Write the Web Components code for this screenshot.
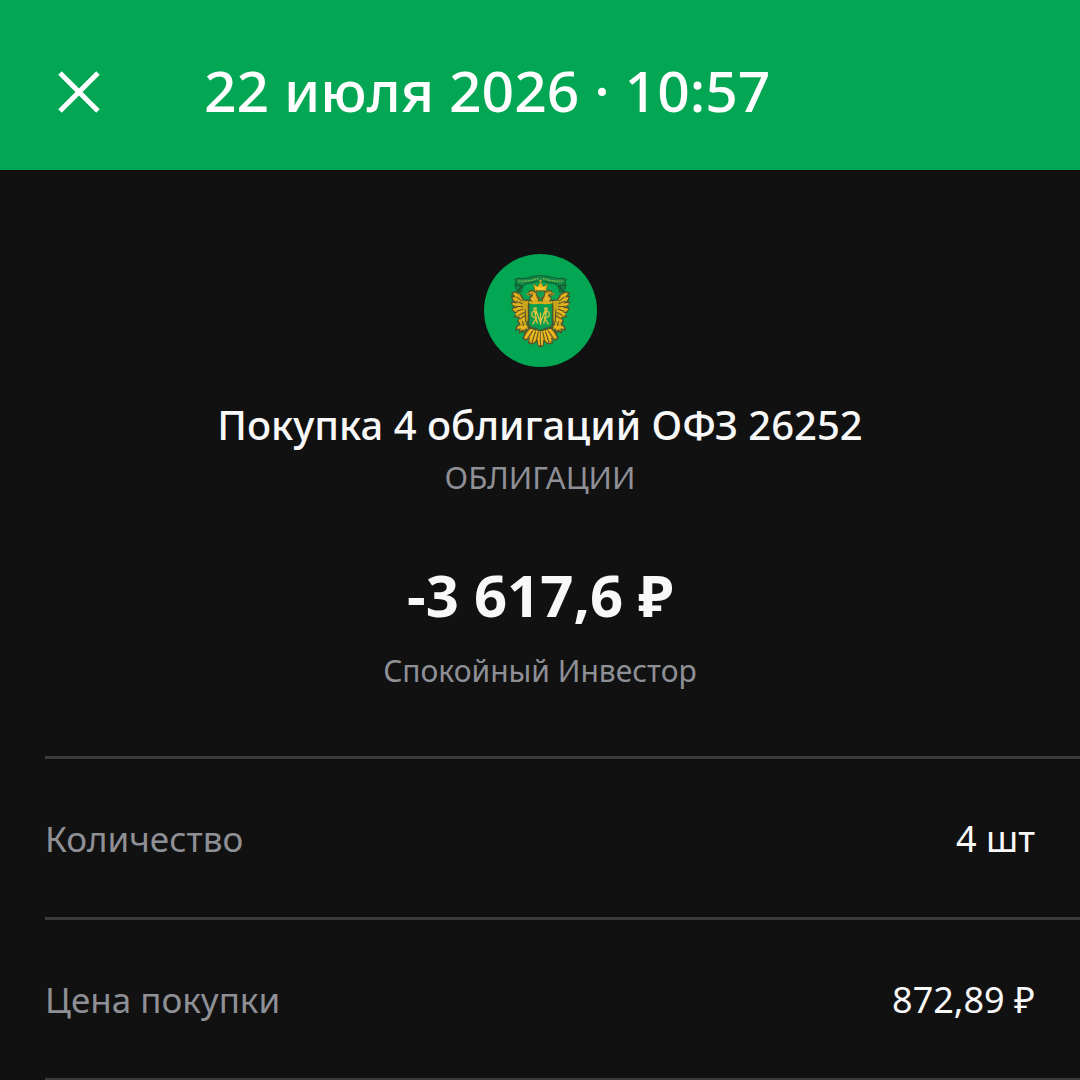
<!DOCTYPE html>
<html lang="ru">
<head>
<meta charset="UTF-8">
<meta name="viewport" content="width=device-width, initial-scale=1">
<title>Покупка облигаций</title>
<style>
    body {
        margin: 0;
        background: #111111;
        color: #f8f8f8;
        font-family: "Noto Sans", "Open Sans", sans-serif;
    }
</style>
</head>
<body>
<operation-page>
    <operation-header slot="header">22 июля 2026 · 10:57</operation-header>
    <operation-summary>
        <bond-emblem slot="icon"></bond-emblem>
        <span slot="title">Покупка 4 облигаций ОФЗ 26252</span>
        <span slot="kind">ОБЛИГАЦИИ</span>
        <span slot="amount">-3 617,6 ₽</span>
        <span slot="account">Спокойный Инвестор</span>
    </operation-summary>
    <detail-row label="Количество">4 шт</detail-row>
    <detail-row label="Цена покупки">872,89 ₽</detail-row>
    <detail-end></detail-end>
</operation-page>

<script>
class OperationPage extends HTMLElement {
    constructor() {
        super();
        const shadow = this.attachShadow({ mode: 'open' });
        shadow.innerHTML = `
            <style>
                :host { display: block; }
                main { display: flex; flex-direction: column; }
            </style>
            <slot name="header"></slot>
            <main><slot></slot></main>
        `;
    }
}

class OperationHeader extends HTMLElement {
    constructor() {
        super();
        const shadow = this.attachShadow({ mode: 'open' });
        shadow.innerHTML = `
            <style>
                :host { display: block; background: #03a653; color: #ffffff; }
                header {
                    display: flex;
                    align-items: center;
                    gap: 88px;
                    padding: 44px 42px 30px;
                }
                button {
                    display: flex;
                    padding: 16px;
                    border: none;
                    background: none;
                    color: inherit;
                    cursor: pointer;
                }
                svg { width: 42px; height: 42px; }
                h1 {
                    margin: 0;
                    padding-bottom: 4px;
                    font-size: 57px;
                    line-height: 92px;
                    font-weight: 500;
                    white-space: nowrap;
                }
            </style>
            <header>
                <button type="button" aria-label="Закрыть">
                    <svg viewBox="0 0 42 42" fill="none" stroke="currentColor" stroke-width="5">
                        <path d="M2 2 40 40M40 2 2 40"/>
                    </svg>
                </button>
                <h1><slot></slot></h1>
            </header>
        `;
    }
}

class OperationSummary extends HTMLElement {
    constructor() {
        super();
        const shadow = this.attachShadow({ mode: 'open' });
        shadow.innerHTML = `
            <style>
                :host { display: block; }
                section {
                    display: flex;
                    flex-direction: column;
                    align-items: center;
                    padding: 84px 44px 61px;
                    text-align: center;
                }
                h2, p { margin: 0; }
                h2 {
                    margin-top: 30px;
                    font-size: 40px;
                    line-height: 56px;
                    font-weight: 500;
                }
                p { font-size: 30px; line-height: 48px; color: #8f8f96; }
                .kind { font-size: 31px; }
                .amount {
                    margin: 54px 0 12px;
                    font-family: "Open Sans", "Noto Sans", sans-serif;
                    font-size: 58px;
                    line-height: 80px;
                    font-weight: 700;
                    color: #f8f8f8;
                }
            </style>
            <section>
                <slot name="icon"></slot>
                <h2><slot name="title"></slot></h2>
                <p class="kind"><slot name="kind"></slot></p>
                <p class="amount"><slot name="amount"></slot></p>
                <p><slot name="account"></slot></p>
            </section>
        `;
    }
}

// Round badge with the double-headed eagle
class BondEmblem extends HTMLElement {
    constructor() {
        super();
        const shadow = this.attachShadow({ mode: 'open' });
        shadow.innerHTML = `
            <style>
                :host { display: block; }
                svg { display: block; width: 113px; height: 113px; }
            </style>
            <svg viewBox="12 12 338 338" fill="none" stroke-linejoin="round" stroke-linecap="round" aria-hidden="true">
                <defs>
                    <g id="half">
                        <!-- ribbon -->
                        <path d="M181 76Q160 77 145 82T117 84L104 88 109 99 105 104 111 124 123 125 128 108 137 101Q160 100 181 91" fill="#11894a" stroke="#17592f" stroke-width="3"/>
                        <path d="M107 104 125 108 115 122" stroke="#17592f" stroke-width="5"/>
                        <path d="M116 93Q146 95 178 84" stroke="#83b54b" stroke-width="4" stroke-dasharray="2 5"/>
                        <!-- wing -->
                        <path d="M148 151 129 149 121 132 105 125 95 128 104 141 94 138 99 152 108 158 94 157 102 170 110 173 96 174 103 187 112 188 103 200 118 201 113 216 122 220 110 229 107 240 119 235 118 248 128 239 132 248 138 237 146 230 139 221 145 210 145 165Z" fill="#c9a51c" stroke="#52532c" stroke-width="4"/>
                        <path d="M106 132 124 149M101 144 121 157M99 161 121 166M101 178 123 174M108 192 126 181M120 199 132 184M119 211 134 196M122 219 132 207M115 233 137 228" stroke="#f0b81c" stroke-width="5"/>
                        <path d="M111 141 125 152M109 153 126 160M108 168 127 170M111 183 127 177M118 195 132 187M121 206 135 196M127 213 130 226M135 179 137 215" stroke="#56502c" stroke-width="3"/>
                        <!-- head and neck -->
                        <path d="M154 154 149 142 157 136 145 133 148 124 157 121 168 127 171 139 176 148V158H154Z" fill="#d7a820" stroke="#5d542b" stroke-width="4"/>
                        <path d="M148 128 139 132 148 136" stroke="#a78b22" stroke-width="3"/>
                        <circle cx="156" cy="129" r="2" fill="#4c452b"/>
                        <path d="M161 134 166 145M153 146 162 149" stroke="#f6bc2c" stroke-width="4"/>
                        <!-- tail and claws -->
                        <path d="M151 231 139 244 129 263 136 269 150 265 145 278 158 281 171 271 174 287 181 289V242L165 239Z" fill="#d0a21c" stroke="#585129" stroke-width="4"/>
                        <path d="M153 239 137 260M162 243 150 270M170 243 161 273M178 244 177 282" stroke="#f4bd21" stroke-width="5"/>
                        <path d="M157 243 143 264M166 245 156 276M174 246 169 270" stroke="#56552a" stroke-width="3"/>
                        <path d="M141 234 134 228 128 237" stroke="#e9b91c" stroke-width="4"/>
                    </g>
                </defs>
                <circle cx="181" cy="181" r="169" fill="#03a653"/>
                <use href="#half"/>
                <use href="#half" transform="matrix(-1 0 0 1 362 0)"/>
                <!-- crown -->
                <path d="M164 122 160 101 172 110 181 96 190 110 202 101 198 122Z" fill="#f1bd20" stroke="#83641e" stroke-width="2"/>
                <path d="M170 112 181 117 192 112" stroke="#fbdc43" stroke-width="3"/>
                <path d="M181 95V89M177 92H185" stroke="#c4a829" stroke-width="3"/>
                <path d="M169 123H193V136L181 147 169 136Z" fill="#16a151" stroke="#636129" stroke-width="3"/>
                <!-- shield -->
                <path d="M146 157Q163 162 181 155 199 162 217 157V222Q214 235 195 234L181 242 167 234Q148 235 146 222Z" fill="#079e51" stroke="#4b572e" stroke-width="4"/>
                <path d="M149 157Q165 161 181 157 197 161 214 157" stroke="#dfae1b" stroke-width="7"/>
                <!-- monogram -->
                <path d="M165 173 181 218 197 173M168 173 166 208 158 221M194 173 196 208 204 221M161 174 171 219M201 174 191 219M181 188V222" stroke="#d9c23c" stroke-width="4"/>
                <path d="M163 183Q154 184 155 194 157 204 170 202M199 183Q208 184 207 194 205 204 192 202" stroke="#d0bd3c" stroke-width="4"/>
            </svg>
        `;
    }
}

class DetailRow extends HTMLElement {
    constructor() {
        super();
        const shadow = this.attachShadow({ mode: 'open' });
        shadow.innerHTML = `
            <style>
                :host { display: block; padding-left: 45px; }
                dl {
                    display: flex;
                    justify-content: space-between;
                    align-items: baseline;
                    margin: 0;
                    padding: 53px 45px 52px 0;
                    border-top: 3px solid #3b3b3b;
                    font-size: 36px;
                    line-height: 53px;
                }
                dt { font-size: 35px; color: #8f8f96; }
                dd { margin: 0; }
            </style>
            <dl>
                <dt></dt>
                <dd><slot></slot></dd>
            </dl>
        `;
        shadow.querySelector('dt').textContent = this.getAttribute('label');
    }
}

// Closing line under the last row
class DetailEnd extends HTMLElement {
    constructor() {
        super();
        const shadow = this.attachShadow({ mode: 'open' });
        shadow.innerHTML = `
            <style>
                :host { display: block; padding-left: 45px; }
                hr { margin: 0; border: none; border-top: 2px solid #3b3b3b; }
            </style>
            <hr>
        `;
    }
}

customElements.define('operation-page', OperationPage);
customElements.define('operation-header', OperationHeader);
customElements.define('operation-summary', OperationSummary);
customElements.define('bond-emblem', BondEmblem);
customElements.define('detail-row', DetailRow);
customElements.define('detail-end', DetailEnd);
</script>
</body>
</html>
